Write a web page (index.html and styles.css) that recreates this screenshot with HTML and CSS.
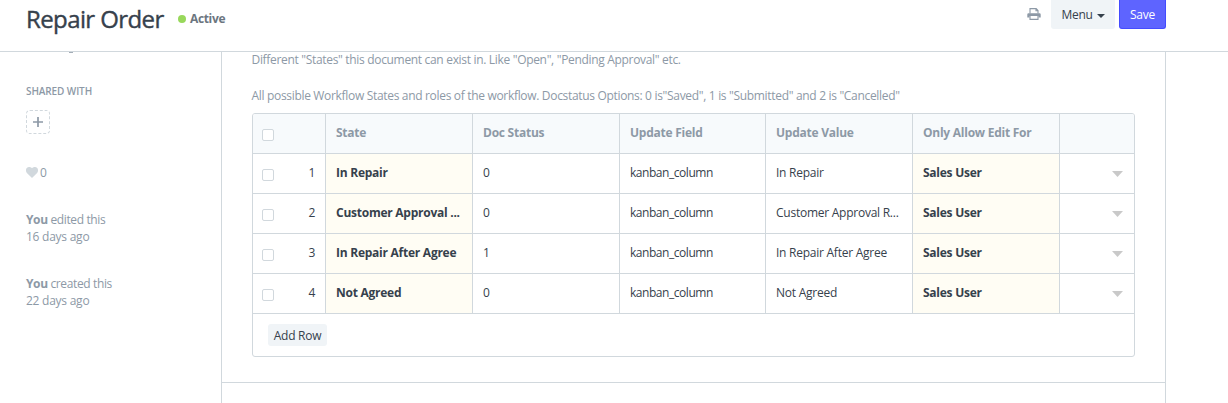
FILE: index.html
```
<!DOCTYPE html>
<html lang="en">
<head>
<meta charset="utf-8">
<title>Repair Order</title>
<link rel="stylesheet" href="styles.css">
</head>
<body>
<header class="page-head">
  <h1 class="title">Repair Order</h1>
  <span class="dot"></span><span class="status">Active</span>
  <div class="actions">
    <svg class="print" width="14" height="12" viewBox="0 0 14 12"><path d="M3 5.500V.6h6.200L11 2.400v3.100M9 .8v1.900h2" fill="none" stroke="#8d99a6" stroke-width="1.1"/><path d="M1.500 5.200h11Q13.700 5.200 13.700 6.400V9.600H11.500V8H2.500v1.600H.3V6.400Q.3 5.200 1.500 5.200z" fill="#8d99a6"/><path d="M3 8v3.400h8V8" fill="none" stroke="#8d99a6" stroke-width="1.1"/></svg>
    <button class="btn menu"><span class="menu-text">Menu</span><span class="caret"></span></button>
    <button class="btn save">Save</button>
  </div>
</header>
<div class="page-body">
  <aside class="sidebar">
    <div class="scrolled-mark"></div>
    <h6 class="side-heading">SHARED WITH</h6>
    <div class="share"><svg width="10" height="10" viewBox="0 0 10 10"><path d="M5 0v10M0 5h10" stroke="#8d99a6" stroke-width="1.7"/></svg></div>
    <div class="likes"><svg width="12" height="11" viewBox="0 0 12 11"><path d="M6 11 .9 5.900C-1.200 3.400.4 0 3 0 4.500 0 5.500.7 6 1.300 6.500.7 7.500 0 9 0c2.600 0 4.200 3.400 2.100 5.900z" fill="#d1d8dd"/></svg><span>0</span></div>
    <p class="log"><b>You</b> <span>edited this</span><br><span class="ago">16 days ago</span></p>
    <p class="log"><b>You</b> <span>created this</span><br><span class="ago">22 days ago</span></p>
  </aside>
  <main class="main">
    <section class="section">
      <p class="desc d1">Different "States" this document can exist in. Like "Open", "Pending Approval" etc.</p>
      <p class="desc d2">All possible Workflow States and roles of the workflow. Docstatus Options: 0 is"Saved", 1 is "Submitted" and 2 is "Cancelled"</p>
      <div class="grid">
        <div class="row head">
          <div class="cell idx"><i class="check"></i></div><div class="cell">State</div><div class="cell">Doc Status</div><div class="cell">Update Field</div><div class="cell">Update Value</div><div class="cell">Only Allow Edit For</div><div class="cell"></div>
        </div>
        <div class="row">
          <div class="cell idx"><i class="check"></i><span>1</span></div><div class="cell req">In Repair</div><div class="cell">0</div><div class="cell field">kanban_column</div><div class="cell">In Repair</div><div class="cell req">Sales User</div><div class="cell open"><i class="tri"></i></div>
        </div>
        <div class="row">
          <div class="cell idx"><i class="check"></i><span>2</span></div><div class="cell req">Customer Approval ...</div><div class="cell">0</div><div class="cell field">kanban_column</div><div class="cell">Customer Approval R...</div><div class="cell req">Sales User</div><div class="cell open"><i class="tri"></i></div>
        </div>
        <div class="row">
          <div class="cell idx"><i class="check"></i><span>3</span></div><div class="cell req">In Repair After Agree</div><div class="cell">1</div><div class="cell field">kanban_column</div><div class="cell">In Repair After Agree</div><div class="cell req">Sales User</div><div class="cell open"><i class="tri"></i></div>
        </div>
        <div class="row">
          <div class="cell idx"><i class="check"></i><span>4</span></div><div class="cell req">Not Agreed</div><div class="cell">0</div><div class="cell field">kanban_column</div><div class="cell">Not Agreed</div><div class="cell req">Sales User</div><div class="cell open"><i class="tri"></i></div>
        </div>
        <div class="foot"><button class="btn add">Add Row</button></div>
      </div>
    </section>
  </main>
</div>
</body>
</html>
```
FILE: styles.css
```
* { box-sizing: border-box; }
body { margin: 0; height: 403px; overflow: hidden; background: #fff; color: #36414c; font: 12px/17px "Open Sans", "Noto Sans", sans-serif; letter-spacing: -0.25px; }
h1, h6, p { margin: 0; }
.page-head { height: 52px; padding: 0 62px 0 26px; border-bottom: 1px solid #d1d8dd; display: flex; align-items: flex-start; }
.title { font-size: 24px; line-height: 38px; font-weight: 400; -webkit-text-stroke: 0.4px #36414c; letter-spacing: -0.6px; white-space: nowrap; width: 152px; }
.dot { width: 8px; height: 8px; border-radius: 50%; background: #98d85b; margin-top: 15px; }
.status { margin: 10px 0 0 4px; font-weight: 700; color: #6c7680; letter-spacing: -0.35px; }
.actions { margin-left: auto; display: flex; align-items: flex-start; }
.print { margin: 8px 10px 0 0; }
.btn { border: 0; font: inherit; letter-spacing: inherit; color: #36414c; background: #f0f4f7; display: flex; align-items: center; justify-content: center; padding: 0; white-space: nowrap; }
.menu { width: 64px; height: 29px; border-radius: 0 0 3px 3px; margin-right: 4px; gap: 4px; }
.caret { border: 4px solid transparent; border-top-color: #36414c; border-bottom: 0; margin-top: 2px; }
.save { width: 47px; height: 29px; border: 1px solid #444bff; border-top: 0; border-radius: 0 0 3px 3px; background: #5e64ff; color: #fff; }
.page-body { display: flex; height: 351px; }
.sidebar { width: 221px; padding-left: 26px; color: #8d99a6; }
.scrolled-mark { width: 4px; height: 1px; margin-left: 43px; background: #a4adb7; }
.side-heading { margin-top: 30px; font-size: 10px; line-height: 17px; font-weight: 600; letter-spacing: -0.1px; }
.share { width: 24px; height: 24px; margin-top: 10px; border: 1px dashed #d1d8dd; border-radius: 4px; display: flex; align-items: center; justify-content: center; }
.likes { margin-top: 30px; display: flex; align-items: center; gap: 2px; height: 17px; }
.log { margin-top: 30px; letter-spacing: -0.37px; }
.log b { font-weight: 700; }
.ago { letter-spacing: -0.25px; }
.main { width: 945px; border: solid #d1d8dd; border-width: 0 1px; }
.section { height: 332px; padding: 0 30px; border-bottom: 1px solid #d1d8dd; }
.desc { color: #8d99a6; white-space: nowrap; letter-spacing: -0.32px; margin-left: -0.5px; }
.d1 { height: 35px; margin-top: -1px; }
.d2 { height: 26px; margin-top: 1px; }
.grid { width: 883px; height: 244px; border: 1px solid #d1d8dd; border-radius: 3px; overflow: hidden; }
.row { display: grid; grid-template-columns: 73px 147px 147px 146px 147px 147px 74px; height: 40px; border-bottom: 1px solid #d1d8dd; }
.head { background: #f7fafc; color: #8d99a6; font-weight: 700; }
.cell { padding: 10px 10px 0; border-right: 1px solid #d1d8dd; white-space: nowrap; overflow: hidden; }
.cell:last-child { border-right: 0; }
.req { background: #fffdf4; font-weight: 700; }
.field { letter-spacing: -0.45px; }
.idx { display: flex; justify-content: space-between; padding-left: 9px; }
.check { width: 12px; height: 12px; margin-top: 5px; border: 1px solid #d1d8dd; border-radius: 2px; background: #fff; }
.open { display: flex; justify-content: flex-end; padding-right: 11px; }
.tri { margin-top: 7px; width: 11px; height: 6px; background: #c9c9c9; clip-path: polygon(0 0, 100% 0, 50% 100%); }
.foot { padding: 10px 15px; }
.add { width: 59px; height: 22px; border-radius: 3px; }
```
